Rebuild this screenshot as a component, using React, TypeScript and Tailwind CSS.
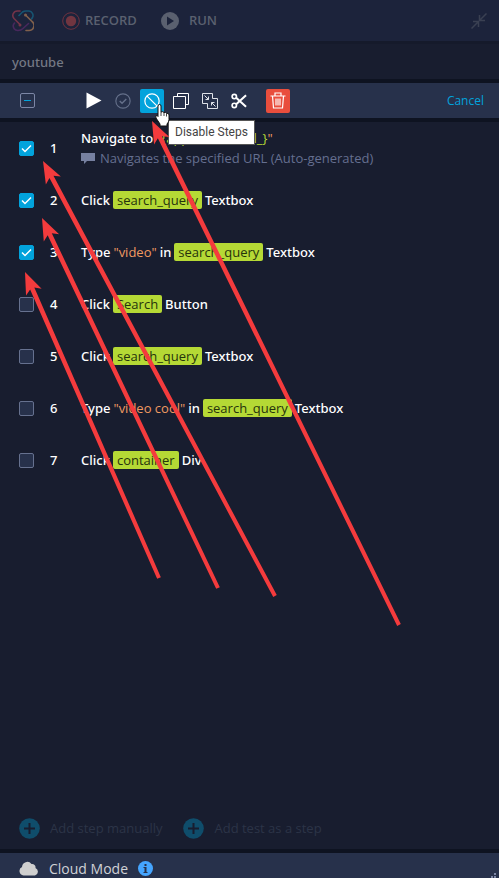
import React from "react";

type Part = { kind: "text" | "tag" | "value" | "variable"; text: string };
type Step = { id: number; checked: boolean; parts: Part[]; note?: string };

const t = (text: string): Part => ({ kind: "text", text });
const tag = (text: string): Part => ({ kind: "tag", text });
const value = (text: string): Part => ({ kind: "value", text });

const steps: Step[] = [
  {
    id: 1,
    checked: true,
    parts: [t("Navigate to"), { kind: "variable", text: "{application_Url_}" }],
    note: "Navigates the specified URL (Auto-generated)",
  },
  { id: 2, checked: true, parts: [t("Click"), tag("search_query"), t("Textbox")] },
  { id: 3, checked: true, parts: [t("Type"), value("video"), t("in"), tag("search_query"), t("Textbox")] },
  { id: 4, checked: false, parts: [t("Click"), tag("Search"), t("Button")] },
  { id: 5, checked: false, parts: [t("Click"), tag("search_query"), t("Textbox")] },
  { id: 6, checked: false, parts: [t("Type"), value("video cool"), t("in"), tag("search_query"), t("Textbox")] },
  { id: 7, checked: false, parts: [t("Click"), tag("container"), t("Div")] },
];

const arrows = [
  { tip: [152, 121], tail: [399, 625] },
  { tip: [43, 161], tail: [275, 596] },
  { tip: [42, 218], tail: [218, 588] },
  { tip: [25, 272], tail: [159, 578] },
];

function Logo() {
  return (
    <svg width="22" height="22" viewBox="0 0 22 22" fill="none" strokeWidth="1.6" strokeLinecap="round" aria-hidden="true">
      <path d="M8 1H5.500A4.500 4.500 0 0 0 2 8.500L8 14.500" stroke="#743449" />
      <path d="M7 5.500L10.500 2Q12 1 14 1H17A4.500 4.500 0 0 1 20.500 7.500L19.500 9" stroke="#175471" />
      <path d="M14 5.500L20 11.500A5 5 0 0 1 17 20.500H14" stroke="#80604c" />
      <path d="M2.500 13L1.500 14.500A4.500 4.500 0 0 0 6 20.500Q9 20.500 11 18.500L16.500 13.500" stroke="#48285d" />
      <circle cx="8" cy="15" r="1.500" fill="#743449" />
      <circle cx="13.500" cy="5" r="1.500" fill="#80604c" />
    </svg>
  );
}

function PlusCircle() {
  return (
    <svg width="21" height="21" viewBox="0 0 21 21" aria-hidden="true">
      <circle cx="10.500" cy="10.500" r="10.300" fill="#0f4d6b" />
      <path d="M10.500 5v11M5 10.500h11" stroke="#181d2f" strokeWidth="2" />
    </svg>
  );
}

function StepPart({ part }: { part: Part }) {
  if (part.kind === "tag") {
    return <span className="rounded-xs bg-[#b5d935] px-1 leading-[18px] text-[#26330c]">{part.text}</span>;
  }
  if (part.kind === "value") {
    return <span className="text-[#f09a62]">"{part.text}"</span>;
  }
  if (part.kind === "variable") {
    return (
      <span className="text-[#f09a62]">
        "<span className="text-[#b5d935]">{part.text}</span>"
      </span>
    );
  }
  return <span className="font-['Noto_Sans',sans-serif] font-medium">{part.text}</span>;
}

function StepRow({ step }: { step: Step }) {
  return (
    <li className="flex h-[52px] items-center pl-[19px]">
      <span className="grid shrink-0">
        <input
          id={`step-${step.id}`}
          type="checkbox"
          defaultChecked={step.checked}
          className="peer col-start-1 row-start-1 size-[15px] appearance-none rounded-xs border border-[#66718f] bg-[#27314b] checked:border-[#02a3dc] checked:bg-[#02a3dc]"
        />
        <svg
          className="pointer-events-none invisible col-start-1 row-start-1 peer-checked:visible"
          width="15"
          height="15"
          viewBox="0 0 15 15"
          fill="none"
          aria-hidden="true"
        >
          <path d="M3 7.500L6 10.500L12 4.500" stroke="#fff" strokeWidth="1.500" />
        </svg>
      </span>
      <label htmlFor={`step-${step.id}`} className="flex items-center whitespace-nowrap leading-5">
        <span className="w-[47px] pl-4 font-['Noto_Sans',sans-serif] font-medium">{step.id}</span>
        <span className="flex flex-col">
          <span className="flex items-center gap-[3px]">
            {step.parts.map((part, i) => (
              <StepPart key={i} part={part} />
            ))}
          </span>
          {step.note && (
            <span className="flex items-center gap-[5px] text-[#656f90]">
              <svg width="14" height="12" viewBox="0 0 14 12" fill="#7680a0" aria-hidden="true">
                <path d="M0 1h14v8H6l-3 3V9H0z" />
              </svg>
              {step.note}
            </span>
          )}
        </span>
      </label>
    </li>
  );
}

function Toolbar() {
  return (
    <div className="flex h-[43px] items-center border-y-4 border-[#0e1321] bg-[#27314b] pl-5 pr-[15px]">
      <button type="button" aria-label="Clear selection" className="flex size-[15px] items-center justify-center rounded-xs border border-[#7c86a5]">
        <span className="h-px w-[7px] bg-[#02a3dc]" />
      </button>
      <div className="ml-[47px] flex items-center gap-[5px]">
        <button type="button" aria-label="Run steps" className="grid size-6 place-items-center">
          <svg width="16" height="17" viewBox="0 0 16 17" fill="#fff">
            <path d="M0.500 0.500L15.500 8.500L0.500 16.500z" />
          </svg>
        </button>
        <button type="button" aria-label="Enable steps" className="grid size-6 place-items-center">
          <svg width="16" height="16" viewBox="0 0 17 17" fill="none" stroke="#65708a" strokeWidth="1.200">
            <circle cx="8.500" cy="8.500" r="7.600" />
            <path d="M5 8.500L7.500 11L12 6.500" strokeWidth="1.500" />
          </svg>
        </button>
        <div className="relative">
          <button type="button" aria-label="Disable steps" className="grid size-6 place-items-center rounded-xs bg-[#02a3dc]">
            <svg width="16" height="16" viewBox="0 0 17 17" fill="none" stroke="#fff" strokeWidth="1.300">
              <circle cx="8.500" cy="8.500" r="7.600" />
              <path d="M3 3L14 14" />
            </svg>
          </button>
          <div role="tooltip" className="absolute left-7 top-[31px] z-10 whitespace-nowrap border border-[#555] bg-white px-[6px] font-['Roboto',sans-serif] text-xs leading-[23px] text-[#444]">
            Disable Steps
          </div>
          <svg className="absolute left-[15px] top-[15px] z-10" width="15" height="23" viewBox="0 0 15 23" aria-hidden="true">
            <path
              d="M3 2Q3 .5 4.500 .5T6 2V8Q8 7 9 8.500Q10.500 7.800 11.500 9.300Q14 8.800 14 11V15.500Q14 18 12 20V22H5V20L1 14Q0 11.500 2 11.500L3 12.500z"
              fill="#fff"
              stroke="#111"
            />
            <path d="M6 8v4M9 8.500v3.500M11.500 9.500v3" stroke="#111" strokeWidth=".8" />
          </svg>
        </div>
        <button type="button" aria-label="Copy steps" className="grid size-6 place-items-center">
          <svg width="16" height="16" viewBox="0 0 16 16" fill="none" stroke="#fff">
            <path d="M4.500 3.500V.5H15.500V11.500H12.500M.5 3.500H12.500V15.500H.5z" />
          </svg>
        </button>
        <button type="button" aria-label="Group steps" className="grid size-6 place-items-center">
          <svg width="16" height="16" viewBox="0 0 16 16" fill="none" stroke="#dfe2e9">
            <path d="M5.500 10.500H.5V.5H10.500V5.500M10.500 5.500H15.500V15.500H5.500V10.500" />
            <path d="M2.500 2.500L6.500 6.500M6.500 3.500V6.500H3.500M13.500 13.500L9.500 9.500M9.500 12.500V9.500H12.500" />
          </svg>
        </button>
        <button type="button" aria-label="Cut steps" className="grid size-6 place-items-center">
          <svg width="16" height="16" viewBox="0 0 17 17" fill="none" stroke="#fff" strokeWidth="1.800">
            <circle cx="3.500" cy="3.800" r="2.300" />
            <circle cx="3.500" cy="13.200" r="2.300" />
            <path d="M5.500 5L16 14.500M5.500 12L16 2.500" strokeWidth="2.200" />
          </svg>
        </button>
      </div>
      <button type="button" aria-label="Delete steps" className="ml-[15px] grid size-6 place-items-center rounded-xs bg-[#e94e3d]">
        <svg width="16" height="17" viewBox="0 0 16 17" fill="none" stroke="#fff" strokeWidth="1.200">
          <path d="M0.500 4H15.500M5 4V1H11V4M2.500 4L3.500 16H12.500L13.500 4M6 6.500V13.500M8 6.500V13.500M10 6.500V13.500" />
        </svg>
      </button>
      <button type="button" className="ml-auto text-xs text-[#02a3dc]">
        Cancel
      </button>
    </div>
  );
}

function Arrows() {
  return (
    <svg className="pointer-events-none absolute left-0 top-0 z-20" width="499" height="640" fill="#f43b3d" aria-hidden="true">
      {arrows.map(({ tip, tail }, i) => {
        const dx = tail[0] - tip[0];
        const dy = tail[1] - tip[1];
        const length = Math.hypot(dx, dy);
        const angle = (Math.atan2(dy, dx) * 180) / Math.PI;
        return (
          <path
            key={i}
            transform={`translate(${tip[0]} ${tip[1]}) rotate(${angle})`}
            d={`M0 0L22 -8.500L18 -2.300L${length} -2L${length} 2L18 2.300L22 8.500z`}
          />
        );
      })}
    </svg>
  );
}

export default function App() {
  return (
    <div className="relative flex min-h-screen flex-col bg-[#181d2f] font-['Open_Sans','Noto_Sans',sans-serif] text-[13px] text-white">
      <header className="flex h-11 items-center border-b-[3px] border-[#151a2b] bg-[#1c233b] pl-3 pr-3 text-[13px] font-semibold text-[#5a606f]">
        <Logo />
        <button type="button" className="ml-7 flex items-center gap-[5px]">
          <svg width="18" height="18" viewBox="0 0 18 18" aria-hidden="true">
            <circle cx="9" cy="9" r="8.300" fill="none" stroke="#71323f" />
            <circle cx="9" cy="9" r="5.200" fill="#713540" />
          </svg>
          RECORD
        </button>
        <button type="button" className="ml-6 flex items-center gap-[10px]">
          <svg width="18" height="18" viewBox="0 0 18 18" aria-hidden="true">
            <circle cx="9" cy="9" r="9" fill="#5a606f" />
            <path d="M6 4.500L13 9L6 13.500z" fill="#1c233b" />
          </svg>
          RUN
        </button>
        <button type="button" aria-label="Collapse window" className="ml-auto">
          <svg width="16" height="16" viewBox="0 0 16 16" fill="none" stroke="#3a4052" strokeWidth="1.500">
            <path d="M15.500 .5L9 7M8.500 2V7.500H14M.5 15.500L7 9M2 8.500H7.500V14" />
          </svg>
        </button>
      </header>
      <h1 className="flex h-[35px] items-center pl-3 pt-[2px] font-['Noto_Sans',sans-serif] font-medium text-[#747884]">youtube</h1>
      <Toolbar />
      <ol className="flex-1">
        {steps.map((step) => (
          <StepRow key={step.id} step={step} />
        ))}
      </ol>
      <div className="flex items-center gap-[21px] pb-[10px] pl-[19px] text-[#2c3447]">
        <button type="button" className="flex items-center gap-[10px]">
          <PlusCircle />
          Add step manually
        </button>
        <button type="button" className="flex items-center gap-[10px]">
          <PlusCircle />
          Add test as a step
        </button>
      </div>
      <footer className="flex h-[29px] items-start overflow-hidden border-t-4 border-[#0e1321] bg-[#27314b] pl-[19px] pt-[6px] text-sm text-[#d0d2d6]">
        <svg className="mt-[2px]" width="20" height="15" viewBox="0 0 20 15" fill="#cfcfcf" aria-hidden="true">
          <path d="M4.500 14.500A4.500 4.500 0 0 1 3 6A5.300 5.300 0 0 1 12.500 3A3.400 3.400 0 0 1 16.500 7A4 4 0 0 1 16 14.500z" />
        </svg>
        <span className="ml-[10px]">Cloud Mode</span>
        <button type="button" aria-label="About cloud mode" className="ml-[10px] mt-[2px]">
          <svg width="15" height="15" viewBox="0 0 15 15">
            <circle cx="7.500" cy="7.500" r="7.500" fill="#45a5ff" />
            <path d="M6.500 3h2v2h-2zM5.500 6h3v5h1v1h-4v-1h1V7h-1z" fill="#27314b" />
          </svg>
        </button>
        <svg className="ml-auto mt-[14px]" width="8" height="5" viewBox="0 0 8 5" fill="#7c86a5" aria-hidden="true">
          <path d="M3 0h2v2H3zM0 3h2v2H0zM3 3h2v2H3z" />
        </svg>
      </footer>
      <Arrows />
    </div>
  );
}
